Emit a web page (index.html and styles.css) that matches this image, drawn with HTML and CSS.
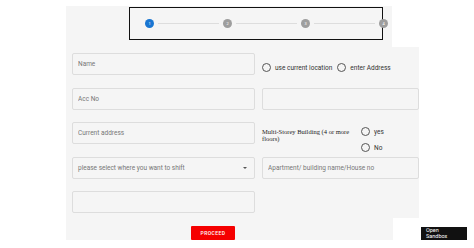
FILE: index.html
```html
<!DOCTYPE html>
<html>
<head>
<meta charset="utf-8">
<link rel="stylesheet" href="styles.css">
</head>
<body>
<div class="wrap">
  <div class="head">
    <div class="stepper">
      <span class="step active">1</span><span class="line"></span>
      <span class="step">2</span><span class="line"></span>
      <span class="step">3</span><span class="line"></span>
      <span class="step">4</span>
    </div>
  </div>
  <div class="form">
    <input class="field" placeholder="Name">
    <div class="radios">
      <label class="radio"><input type="radio" name="loc"><span>use current location</span></label>
      <label class="radio"><input type="radio" name="loc"><span>enter Address</span></label>
    </div>
    <input class="field" placeholder="Acc No">
    <input class="field" placeholder="">
    <input class="field" placeholder="Current address">
    <div class="multi">
      <div class="mtext">Multi-Storey Building (4 or more floors)</div>
      <div class="yn">
        <label class="radio"><input type="radio" name="ms"><span>yes</span></label>
        <label class="radio"><input type="radio" name="ms"><span>No</span></label>
      </div>
    </div>
    <div class="field select"><span>please select where you want to shift</span><span class="arrow"></span></div>
    <input class="field" placeholder="Apartment/ building name/House no">
    <input class="field" placeholder="">
    <div></div>
  </div>
  <div class="foot">
    <button class="proceed">PROCEED</button>
  </div>
</div>
<div class="sandbox">Open<br>Sandbox</div>
</body>
</html>
```

FILE: styles.css
```css
html, body { margin: 0; padding: 0; background: #fff; }
body { font-family: Roboto, "Liberation Sans", sans-serif; }
.wrap { margin: 6px 0 0 66px; }
.head {
  width: 326px; height: 41px; background: #f5f5f5;
  padding: 1px 0 0 63px; box-sizing: border-box;
}
.stepper {
  width: 254px; height: 33px; box-sizing: border-box;
  border: 1.5px solid #111; display: flex; align-items: center;
  padding-left: 15px;
}
.step {
  flex: 0 0 9px; width: 9px; height: 9px; border-radius: 50%;
  background: #9e9e9e; color: #fff; font-size: 4px; line-height: 9px;
  text-align: center;
}
.step.active { background: #1976d2; }
.line { flex: 0 0 61px; height: 1px; background: #ddd; margin: 0 4px; }
.form {
  width: 353px; background: #f5f5f5; box-sizing: border-box;
  padding: 6px 0 5px 6px;
  display: grid; grid-template-columns: 183px 157px; column-gap: 7px;
  grid-template-rows: repeat(5, 22px); row-gap: 12.5px;
}
.field {
  box-sizing: border-box; width: 100%; height: 22px; margin: 0;
  border: 1px solid #ddd; border-radius: 2px; background: #f5f5f5;
  padding: 0 5px; font-family: Roboto, "Liberation Sans", sans-serif;
  font-size: 6.5px; color: #777; outline: none;
}
.field::placeholder { color: #777; }
.select { display: flex; align-items: center; justify-content: space-between; padding-right: 7px; }
.arrow { width: 0; height: 0; border-left: 2px solid transparent; border-right: 2px solid transparent; border-top: 2.5px solid #555; }
.radios { display: flex; align-items: center; gap: 5px; margin-top: 10px; align-self: start; }
.radio { display: flex; align-items: center; gap: 4px; font-size: 6.5px; color: #333; }
.radio input {
  appearance: none; -webkit-appearance: none; margin: 0;
  width: 9px; height: 9px; border: 1px solid #555; border-radius: 50%;
  box-sizing: border-box; background: transparent;
}
.multi { display: flex; align-items: flex-start; gap: 3px; padding-top: 4px; }
.mtext {
  width: 96px; font-family: "Liberation Serif", serif; font-size: 6.5px;
  line-height: 7px; color: #222; padding-top: 2px;
}
.yn { display: flex; flex-direction: column; gap: 7px; padding-top: 1px; }
.foot { width: 327px; height: 22px; background: #f5f5f5; padding: 8px 0 0 125px; box-sizing: border-box; }
.proceed {
  display: block; width: 44px; height: 14px; padding: 0; border: 0; border-radius: 1px;
  background: #f50000; color: #fff; font-family: Roboto, "Liberation Sans", sans-serif;
  font-size: 5px; font-weight: 500; letter-spacing: 0.4px;
}
.sandbox {
  position: fixed; right: 7px; bottom: 8px; width: 46px; height: 13px;
  background: #111; color: #fff; font-size: 5.5px; line-height: 5.5px;
  padding: 1px 5px; box-sizing: border-box;
}
```
